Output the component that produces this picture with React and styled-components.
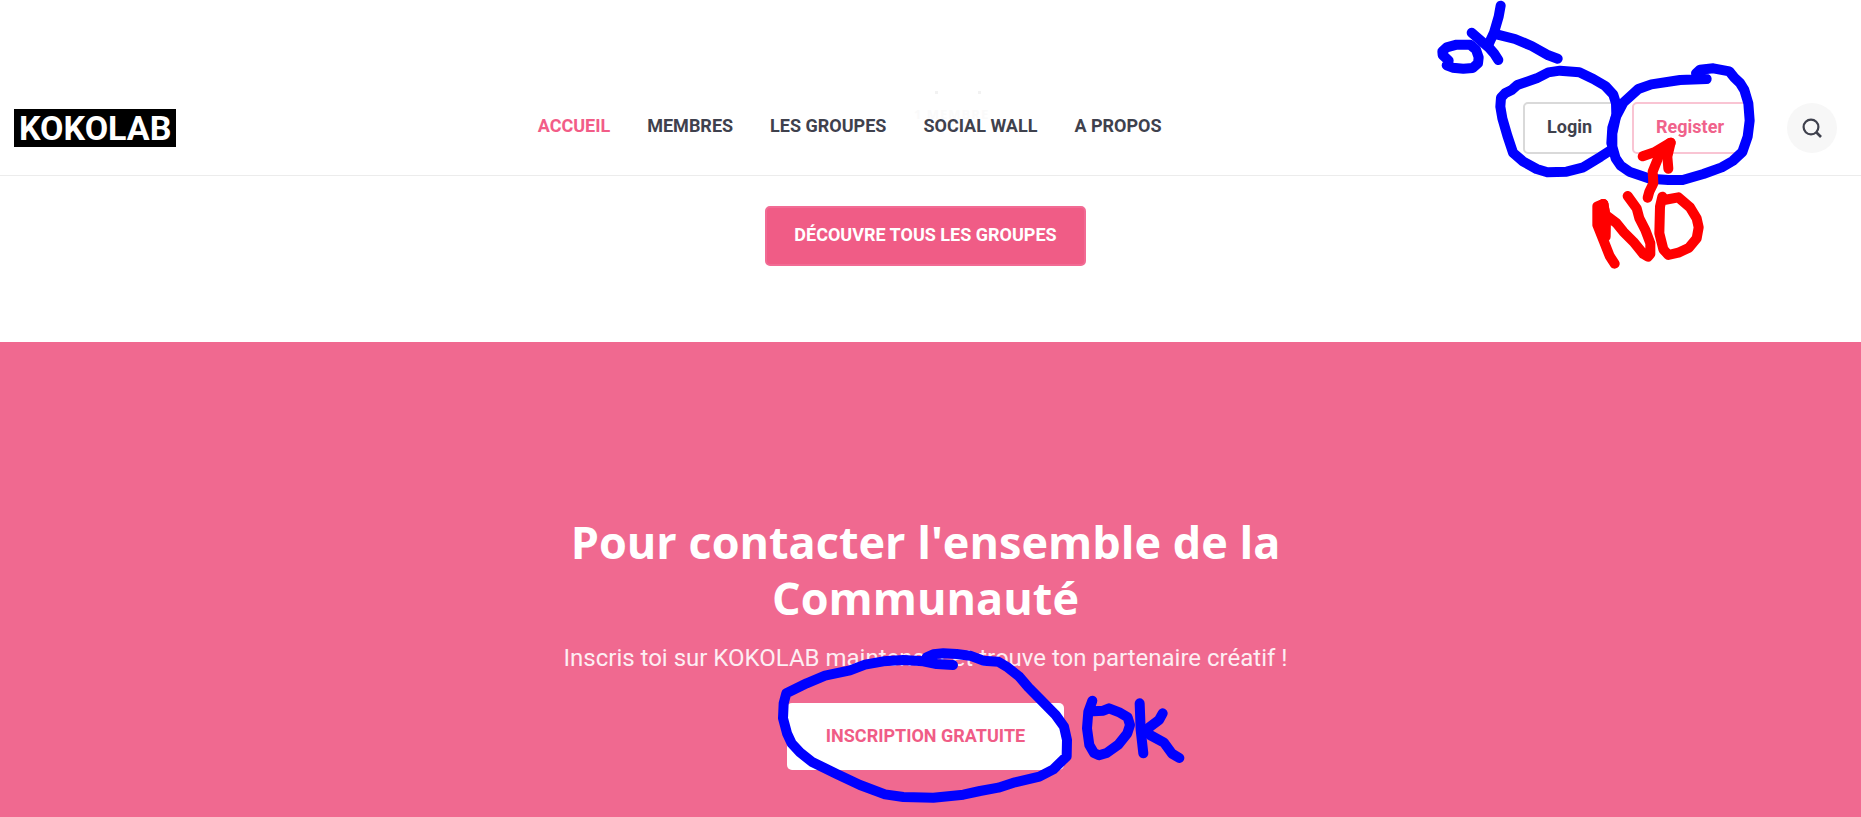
import React from 'react';
import styled, { createGlobalStyle } from 'styled-components';

const GlobalStyle = createGlobalStyle`
  * {
    box-sizing: border-box;
  }

  body {
    margin: 0;
    background: #fff;
    font-family: Roboto, sans-serif;
    color: #3f414d;
  }

  a {
    text-decoration: none;
  }
`;

const Page = styled.div`
  display: flex;
  flex-direction: column;
  min-height: 100vh;
`;

const Header = styled.header`
  position: relative;
  display: flex;
  align-items: center;
  justify-content: space-between;
  padding: 80px 24px 0 14px;
  height: 176px;
  border-bottom: 1px solid #ececec;
`;

const Logo = styled.a`
  padding: 0 5px;
  background: #000;
  color: #fff;
  font-size: 34px;
  line-height: 38px;
  font-weight: 700;
`;

const Nav = styled.nav`
  display: flex;
  gap: 37px;
  padding-bottom: 4px;
`;

const NavLink = styled.a`
  color: ${({ $active }) => ($active ? '#f25c87' : '#3f414d')};
  font-size: 18px;
  line-height: 24px;
  font-weight: 700;
`;

const Actions = styled.div`
  display: flex;
  align-items: center;
  gap: 16px;
`;

const AccountButton = styled.button`
  height: 52px;
  padding: 0 22px 2px;
  border: 2px solid ${({ $pink }) => ($pink ? '#f9c4d3' : '#d9d9d9')};
  border-radius: 5px;
  background: #fff;
  color: ${({ $pink }) => ($pink ? '#f0628b' : '#3f414d')};
  font-family: inherit;
  font-size: 18px;
  font-weight: 700;
  cursor: pointer;
`;

const SearchButton = styled.button`
  display: flex;
  align-items: center;
  justify-content: center;
  width: 50px;
  height: 50px;
  margin-left: 23px;
  padding: 0;
  border: none;
  border-radius: 50%;
  background: #f7f7f7;
  cursor: pointer;
`;

const Ghost = styled.div`
  position: absolute;
  top: 88px;
  left: 914px;
  color: #fafafa;
  font-family: 'Open Sans', sans-serif;
  font-size: 13px;
  line-height: 18px;
  font-weight: 700;
  letter-spacing: 1px;
  white-space: nowrap;
`;

const GhostDots = styled.div`
  display: flex;
  justify-content: space-between;
  width: 46px;
  height: 17px;
  margin-left: 21px;
  padding-top: 3px;

  &::before,
  &::after {
    content: '';
    width: 3px;
    height: 3px;
    background: #f2f2f2;
  }
`;

const Groups = styled.section`
  display: flex;
  justify-content: center;
  padding: 30px 10px 76px 0;
`;

const GroupsButton = styled.button`
  height: 60px;
  padding: 0 27px 4px;
  border: 2px solid #f26b94;
  border-radius: 5px;
  background: #f05c86;
  color: #fff;
  font-family: inherit;
  font-size: 18px;
  font-weight: 700;
  cursor: pointer;
`;

const Cta = styled.section`
  flex: 1;
  display: flex;
  flex-direction: column;
  align-items: center;
  padding: 172px 10px 47px 0;
  background: #f06990;
  color: #fff;
  text-align: center;
`;

const Title = styled.h2`
  max-width: 760px;
  margin: 0;
  font-family: 'Open Sans', sans-serif;
  font-size: 45px;
  line-height: 56px;
  font-weight: 700;
`;

const Lead = styled.p`
  margin: 16px 0 29px;
  font-size: 24px;
  line-height: 32px;
  color: #fdeef3;
`;

const SignUp = styled.div`
  position: relative;
`;

const SignUpButton = styled.button`
  height: 67px;
  padding: 0 39px 2px;
  border: none;
  border-radius: 5px;
  background: #fff;
  color: #f05c86;
  font-family: inherit;
  font-size: 18px;
  font-weight: 700;
  cursor: pointer;
`;

const Ink = styled.svg`
  position: absolute;
  z-index: 2;
  fill: none;
  stroke-width: 30;
  stroke-linecap: round;
  stroke-linejoin: round;
  pointer-events: none;
`;

const HeaderInk = styled(Ink)`
  top: 0;
  right: 0;
`;

const SignUpInk = styled(Ink)`
  top: -63px;
  left: -27px;
`;

const links = ['ACCUEIL', 'MEMBRES', 'LES GROUPES', 'SOCIAL WALL', 'A PROPOS'];

const SearchIcon = () => (
  <svg width="20" height="20" viewBox="0 0 20 20" fill="none" stroke="#3f414d" strokeWidth="2.2">
    <circle cx="9" cy="9" r="7.4" />
    <path d="M14 14l5 5" strokeWidth="2.6" />
  </svg>
);

const HeaderNotes = () => (
  <HeaderInk width="441" height="280" viewBox="0 0 1323 840" aria-hidden="true">
    <g stroke="#00f">
      <path d="M86 182L68 165L67 154L80 142L110 134H150L168 149L176 172L174 190L158 204L130 206L98 203L80 196" />
      <path d="M155 98L207 143L222 160L235 180" />
      <path d="M242 17L236 50L222 98L207 130" />
      <path d="M230 103L285 117L335 138L385 166L413 176" />
      <path d="M576 448L542 470L490 502L440 515L382 517L350 507L310 485L279 458L262 407L247 355L241 320L243 293L255 280L275 270L292 255L350 235L385 217L420 212L478 217L520 237L556 258L580 284L588 310L589 345L577 383L574 430" />
      <path d="M860 237L780 240L694 253L655 267L610 308L588 350L577 400V440L587 475L602 497L628 515L690 536L745 540H788L850 522L905 502L938 483L967 456L983 410L989 362L985 310L973 270L960 249L943 233L928 214L880 205L840 209L828 220" />
    </g>
    <g stroke="#f00">
      <path d="M683 593L688 575L700 550L698 515L712 480L720 455L752 428" />
      <path d="M668 469L703 457L752 428L742 470L745 506" />
      <path d="M550 612L532 619V675L552 725L569 768L584 791" />
      <path d="M536 620L550 612L558 655L557 710L545 690Z" fill="#f00" />
      <path d="M550 612L556 644L590 670L610 695L640 725L670 762L684 770L691 762V730L676 690L658 655L650 625L623 588" />
      <path d="M727 590L720 620L718 700L730 748L745 765L775 758L807 743L830 715L836 682L830 655L810 622L775 592L732 600" />
    </g>
  </HeaderInk>
);

const SignUpNotes = () => (
  <SignUpInk width="440" height="177" viewBox="0 0 1320 531" stroke="#00f" aria-hidden="true">
    <path d="M579 75L530 72L490 64L430 60L370 64L315 74L270 91L195 107L140 130L79 160L71 190L69 235L81 280L95 310L120 337L155 365L230 402L300 435L375 463L430 471L520 473L610 464L660 453L715 443L765 427L838 410L880 388L920 349L921 300L912 260L887 225L845 182L805 142L778 110L740 80L715 65L670 62L630 47L590 42L550 40L520 43L500 52" />
    <path d="M997 182L985 215L981 265L988 315L1002 339L1017 346L1040 339L1075 314L1102 280L1110 255L1103 232L1080 218L1047 205L1030 212L1000 214" />
    <path d="M1139 190L1142 270L1150 340" />
    <path d="M1208 220L1197 240L1160 268L1170 285L1212 308L1236 341L1258 354" />
  </SignUpInk>
);

const App = () => {
  return (
    <Page>
      <GlobalStyle />
      <Header>
        <Ghost aria-hidden="true">
          <GhostDots />
          1 MEMBRE
        </Ghost>
        <Logo href="#">KOKOLAB</Logo>
        <Nav>
          {links.map((link, index) => (
            <NavLink key={link} href="#" $active={index === 0}>
              {link}
            </NavLink>
          ))}
        </Nav>
        <Actions>
          <AccountButton>Login</AccountButton>
          <AccountButton $pink>Register</AccountButton>
          <SearchButton aria-label="Search">
            <SearchIcon />
          </SearchButton>
        </Actions>
        <HeaderNotes />
      </Header>

      <Groups>
        <GroupsButton>DÉCOUVRE TOUS LES GROUPES</GroupsButton>
      </Groups>

      <Cta>
        <Title>Pour contacter l'ensemble de la Communauté</Title>
        <Lead>Inscris toi sur KOKOLAB maintenant et trouve ton partenaire créatif !</Lead>
        <SignUp>
          <SignUpButton>INSCRIPTION GRATUITE</SignUpButton>
          <SignUpNotes />
        </SignUp>
      </Cta>
    </Page>
  );
};

export default App;
